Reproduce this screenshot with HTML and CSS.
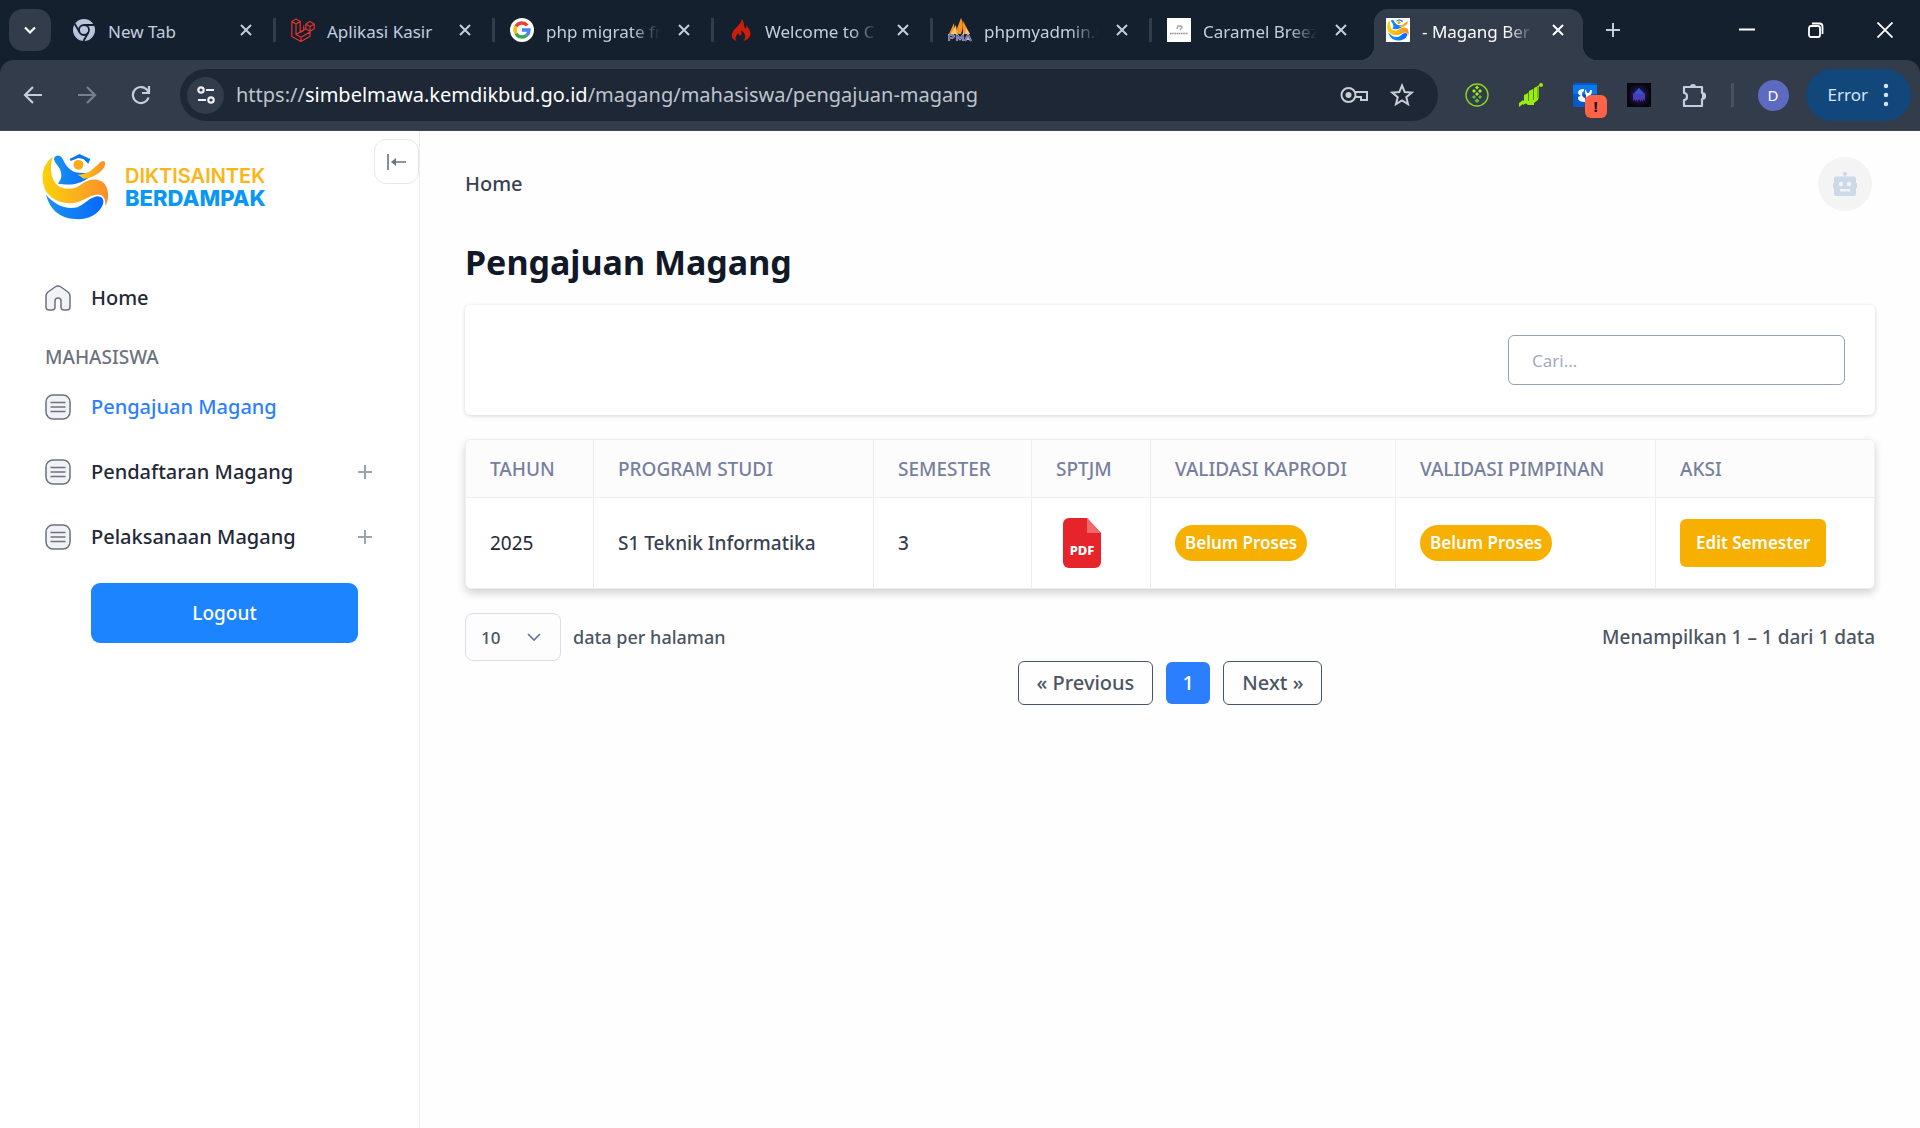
FILE: index.html
```html
<!DOCTYPE html>
<html lang="id">
<head>
<meta charset="utf-8">
<meta name="viewport" content="width=device-width, initial-scale=1">
<title>Magang Berdampak</title>
<link rel="stylesheet" href="styles.css">
</head>
<body>
<svg class="defs" aria-hidden="true">
  <symbol id="x" viewBox="0 0 16 16"><path d="M3 3l10 10M13 3L3 13" fill="none" stroke="currentColor" stroke-width="2"/></symbol>
  <symbol id="plus" viewBox="0 0 16 16"><path d="M8 1v14M1 8h14" fill="none" stroke="currentColor" stroke-width="2"/></symbol>
  <symbol id="list" viewBox="0 0 26 26"><rect x="1" y="1" width="24" height="24" rx="7" fill="#f1f2f4" stroke="#6b7280" stroke-width="1.5"/><path d="M5.500 8.500h15M5.500 13h15M5.500 17.500h15" stroke="#6b7280" stroke-width="1.5"/></symbol>
  <symbol id="logo" viewBox="5 9 68 67">
    <defs>
      <linearGradient id="gold" x1="0" x2="1"><stop offset="0" stop-color="#fbd20b"/><stop offset="1" stop-color="#f98f2b"/></linearGradient>
      <linearGradient id="sea" x1="0" x2="1"><stop offset="0" stop-color="#1a93ef"/><stop offset="1" stop-color="#0668ff"/></linearGradient>
    </defs>
    <path fill="url(#gold)" d="M16 12C8 17 4 27 6 38c2 13 14 21 27 21 12 0 19-8 28-9 6 0 9 4 8 12 5-7 4-20-3-25-7-4-15-2-20 2-6 5-11 6-18 5C16 42 11 27 16 12z"/>
    <path fill="url(#sea)" d="M9 50c8 10 20 16 32 13 8-3 12-10 20-11 6 0 8 5 5 10-5 9-15 14-27 13C22 74 13 65 9 50z"/>
    <path fill="url(#sea)" d="M17 14c2-5 7-4 9 0 4 9 10 14 17 14 5 0 9 1 14 2-8 6-16 10-25 10-4 0-8 0-11-1 5-5 4-10 2-15-2-4-5-6-6-10z"/>
    <path fill="url(#gold)" d="M41 30c8 0 13-3 18-8 4-3 7-8 10-5 1 5-4 10-9 13-5 3-9 4-13 4-2-2-4-3-6-4z"/>
    <path fill="#0878ee" d="M33 14l10-5 11 5-2 5-5-5-5-1-8 3z"/>
    <circle cx="42" cy="20" r="5" fill="#faab18"/>
  </symbol>
</svg>

<header class="browser">
  <div class="tabstrip">
    <button class="tab-search" aria-label="Search tabs"><svg width="16" height="16" viewBox="0 0 16 16"><path d="M3 5.500l5 5 5-5" fill="none" stroke="currentColor" stroke-width="2.200"/></svg></button>
    <div class="tab">
      <svg class="fav" viewBox="0 0 24 24"><circle cx="12" cy="12" r="11" fill="#b9c5dc"/><circle cx="12" cy="12" r="5" fill="none" stroke="#15202e" stroke-width="1.8"/><path d="M12 7h10M7.700 14.500L2.700 5.800M16.300 14.500L11.500 23" stroke="#15202e" stroke-width="1.8"/></svg>
      <span class="tab-title">New Tab</span><button class="close" aria-label="Close tab"><svg><use href="#x"/></svg></button>
    </div>
    <div class="tab">
      <svg class="fav" viewBox="0 0 24 24"><path d="M.8 3.500L5 1l4.200 2.500v11l3.500-2V7.500M.8 3.500v15L10 23.500l9-5.200v-5M.8 3.500L5 6l4.200-2.500M5 6v10.500l5 2.700 9-5.300M10 19.200v4.300M14.800 6l4.200-2.500L23.200 6v4.800L19 13.300l-4.200-2.500V6L19 8.500 23.200 6M19 8.500v4.800M5 16.500l9.800-5.700" fill="none" stroke="#e0332c" stroke-width="1.200" stroke-linejoin="round"/></svg>
      <span class="tab-title">Aplikasi Kasir</span><button class="close" aria-label="Close tab"><svg><use href="#x"/></svg></button>
    </div>
    <div class="tab">
      <svg class="fav" viewBox="0 0 24 24"><circle cx="12" cy="12" r="12" fill="#fff"/><g fill="none" stroke-width="3.400"><path d="M17.300 7.500A7 7 0 0 0 6 8.400" stroke="#ea4335"/><path d="M6 8.400a7 7 0 0 0 0 7.200" stroke="#fbbc05"/><path d="M6 15.600a7 7 0 0 0 10.700 1.600" stroke="#34a853"/><path d="M16.700 17.200A7 7 0 0 0 19 12h-7" stroke="#4285f4"/></g></svg>
      <span class="tab-title fade">php migrate fr</span><button class="close" aria-label="Close tab"><svg><use href="#x"/></svg></button>
    </div>
    <div class="tab">
      <svg class="fav" viewBox="0 0 24 24"><path d="M12.500 1c1 5-8 9-9.500 15-.7 3.500 1.500 6 4.500 7-2-3-.5-6 2.500-8-.5 3 2 3 2.500 1 .4-1.500-.8-2-.4-3.600 3.400 2 6 6 2.400 10.600 4-1 7-4 7-7.500 0-4-3-5-3.500-8.500-.8 1.500-.3 3-1.500 3.500C14 9 16.500 5 12.500 1z" fill="#cf1d0c"/></svg>
      <span class="tab-title fade">Welcome to C</span><button class="close" aria-label="Close tab"><svg><use href="#x"/></svg></button>
    </div>
    <div class="tab">
      <svg class="fav" viewBox="0 0 24 24"><path d="M1 16L6 5l1 11zM7 16L13 0c3 5 2 11 0 16zM15 16V3l7 13z" fill="#f7941e"/><path d="M3 16l5-9 1 9zM17 16l1-6 4 6z" fill="#fcc577"/><path d="M1 23v-6h4q2 2-1 3H1M9 23v-6l3 4 3-4v6M17 23l3-6 3 6M18 21h4" fill="none" stroke="#b9b9da" stroke-width="2.200"/><path d="M1 23v-6h4q2 2-1 3H1M9 23v-6l3 4 3-4v6M17 23l3-6 3 6" fill="none" stroke="#39396b" stroke-width=".8"/></svg>
      <span class="tab-title fade">phpmyadmin.n</span><button class="close" aria-label="Close tab"><svg><use href="#x"/></svg></button>
    </div>
    <div class="tab">
      <svg class="fav" viewBox="0 0 24 24"><path fill="#fff" d="M0 0h24v24H0z"/><path d="M10 11l1-3h3l1 1-2 3" fill="none" stroke="#b3a2a8" stroke-width="1.500"/><path d="M3 15.500h18" stroke="#9b8389" stroke-width="1.500" stroke-dasharray="1.500 .7"/></svg>
      <span class="tab-title fade">Caramel Breez</span><button class="close" aria-label="Close tab"><svg><use href="#x"/></svg></button>
    </div>
    <div class="tab tab-active">
      <svg class="fav" viewBox="0 0 24 24"><path fill="#fff" d="M0 0h24v24H0z"/><use href="#logo" x="1" y="1" width="22" height="22"/></svg>
      <span class="tab-title fade">- Magang Ber</span><button class="close" aria-label="Close tab"><svg><use href="#x"/></svg></button>
    </div>
    <button class="new-tab" aria-label="New tab"><svg width="16" height="16"><use href="#plus"/></svg></button>
    <div class="window-buttons">
      <button aria-label="Minimize"><svg width="16" height="16" viewBox="0 0 16 16"><path d="M0 7.500h16" stroke="currentColor" stroke-width="2"/></svg></button>
      <button aria-label="Restore"><svg width="16" height="16" viewBox="0 0 16 16"><g fill="none" stroke="currentColor" stroke-width="1.800"><rect x="1" y="4" width="11" height="11" rx="2"/><path d="M4 1.500h7.500a3 3 0 0 1 3 3V12"/></g></svg></button>
      <button aria-label="Close"><svg width="16" height="16" viewBox="0 0 16 16"><path d="M.5.500l15 15M15.500.5l-15 15" stroke="currentColor" stroke-width="1.800"/></svg></button>
    </div>
  </div>

  <div class="toolbar">
    <div class="nav">
      <button aria-label="Back"><svg width="20" height="20" viewBox="0 0 20 20"><path d="M19 10H2M10 2L2 10l8 8" fill="none" stroke="currentColor" stroke-width="2.200"/></svg></button>
      <button class="dim" aria-label="Forward"><svg width="20" height="20" viewBox="0 0 20 20"><path d="M1 10h17M10 2l8 8-8 8" fill="none" stroke="currentColor" stroke-width="2.200"/></svg></button>
      <button aria-label="Reload"><svg width="20" height="20" viewBox="0 0 20 20"><path d="M17.500 12.500A8 8 0 1 1 16.500 5.500L18 7.500M18 1v7h-7" fill="none" stroke="currentColor" stroke-width="2.200"/></svg></button>
    </div>
    <div class="omnibox">
      <button class="site-info" aria-label="Site information"><svg width="20" height="20" viewBox="0 0 20 20"><g fill="none" stroke="currentColor" stroke-width="2.200"><circle cx="5" cy="5" r="2.700"/><path d="M10 5h8M2 15h8"/><circle cx="15" cy="15" r="2.700"/></g></svg></button>
      <div class="url" role="textbox" aria-label="Address" contenteditable="true" spellcheck="false">https://<span>simbelmawa.kemdikbud.go.id</span>/magang/mahasiswa/pengajuan-magang</div>
      <button aria-label="Passwords"><svg width="28" height="20" viewBox="0 0 28 20"><circle cx="8.500" cy="10" r="7" fill="none" stroke="currentColor" stroke-width="2"/><circle cx="8.500" cy="10" r="3" fill="currentColor"/><path d="M14.500 7H27v8h-6v-3h-6" fill="none" stroke="currentColor" stroke-width="2"/></svg></button>
      <button aria-label="Bookmark"><svg width="24" height="24" viewBox="0 0 24 24"><path d="M12 2.500l2.700 6.600 7 .5-5.400 4.600 1.700 6.900-6-3.700-6 3.700 1.700-6.900L2.300 9.600l7-.5z" fill="none" stroke="currentColor" stroke-width="2"/></svg></button>
    </div>
    <div class="extensions">
      <button aria-label="Pineapple extension"><svg width="24" height="24" viewBox="0 0 24 24"><circle cx="12" cy="12" r="11" fill="none" stroke="#86d81b" stroke-width="1.400"/><g fill="#a3ee1c"><path d="M12 2.500l2 2-2 2-2-2zM9 6l2 2-2 2-2-2zM15 6l2 2-2 2-2-2zM12 9l2 2-2 2-2-2z"/></g><g fill="#5cc032"><path d="M9 12l2 2-2 2-2-2zM15 12l2 2-2 2-2-2zM12 15.500l2.500 2.300L12 20l-2.500-2.200z"/></g></svg></button>
      <button aria-label="Chart extension"><svg width="24" height="24" viewBox="0 0 24 24"><path d="M0 24v-4l4-3v4zM5 19v-7l4-2v12zM10 22V8l4-2v16zM15 20V5l4-2v14z" fill="#9cec0b"/><path d="M4 18l5-5v6l-5 3zM9 12l6 6v4H9zM14 8l6-6v13l-6 5z" fill="#9cec0b"/><circle cx="22" cy="2" r="2" fill="#9cec0b"/><path d="M9.500 9v9M14.500 6v11M19 4v11" stroke="#4e8424"/></svg></button>
      <button class="alert-ext" aria-label="Blue extension"><svg width="24" height="24" viewBox="0 0 24 24"><rect width="24" height="24" rx="2" fill="#0759c8"/><path d="M0 2h24v9H0z" fill="#0b78ea"/><path d="M11 6q-6 0-6 4 0 2 3 3-3 0-3 2 0 4 7 4v-4q-3-1-3-4 0-2 2-3zM13 6q0 4 2 4t2-3h2q0 5-3 6v4h-3v-5q-1-1-1-4z" fill="#fff"/></svg><span class="badge-alert">!</span></button>
      <button aria-label="Purple extension"><svg width="24" height="24" viewBox="0 0 24 24"><defs><radialGradient id="glow"><stop offset="0" stop-color="#3a1b75"/><stop offset="1" stop-color="#05050b"/></radialGradient></defs><path fill="url(#glow)" d="M0 0h24v24H0z"/><path d="M12 5l6 6v7l-2-2v3l-2-3v3l-2-3-2 3v-3l-2 3v-3l-2 2v-7z" fill="#4a3cb4"/><path d="M12 5l5 6H7z" fill="#2859c8"/></svg></button>
      <button aria-label="Extensions"><svg width="26" height="26" viewBox="0 0 26 26"><path d="M3 5h18v6a3 3 0 0 1 0 6v7H3v-6c4 0 4-7 0-7z" fill="none" stroke="currentColor" stroke-width="2.200" stroke-linejoin="round"/><path d="M9 5a3 3 0 0 1 6 0zM21 11a3 3 0 0 1 0 6z" fill="currentColor"/></svg></button>
    </div>
    <span class="divider"></span>
    <button class="avatar" aria-label="Profile D">D</button>
    <button class="error">Error <svg width="6" height="24" viewBox="0 0 6 24" fill="currentColor"><circle cx="3" cy="3" r="2.200"/><circle cx="3" cy="12" r="2.200"/><circle cx="3" cy="21" r="2.200"/></svg></button>
  </div>
</header>

<div class="app">
  <aside class="sidebar">
    <button class="collapse" aria-label="Collapse sidebar"><svg width="20" height="16" viewBox="0 0 20 16"><path d="M1 0v16M6 8h13" stroke="#6b7280" stroke-width="1.600"/><path d="M4 8l5-4v8z" fill="#6b7280"/></svg></button>
    <a class="brand" href="#">
      <svg width="67" height="66"><use href="#logo"/></svg>
      <span class="brand-text"><span>DIKTISAINTEK</span><b>BERDAMPAK</b></span>
    </a>
    <nav class="menu">
      <a href="#"><svg viewBox="0 0 26 26"><path d="M1 11q0-2 2-4l7-5q3-2 6 0l7 5q2 2 2 4v11q0 3-3 3h-3q-3 0-3-3v-6q0-3-3-3t-3 3v6q0 3-3 3H4q-3 0-3-3z" fill="#f1f2f4" stroke="#6b7280" stroke-width="1.500"/></svg>Home</a>
      <h2>MAHASISWA</h2>
      <a class="current" href="#"><svg><use href="#list"/></svg>Pengajuan Magang</a>
      <a href="#"><svg><use href="#list"/></svg>Pendaftaran Magang<svg class="expand" viewBox="0 0 14 14"><path d="M7 0v14M0 7h14" stroke="#9ca3af" stroke-width="2"/></svg></a>
      <a href="#"><svg><use href="#list"/></svg>Pelaksanaan Magang<svg class="expand" viewBox="0 0 14 14"><path d="M7 0v14M0 7h14" stroke="#9ca3af" stroke-width="2"/></svg></a>
    </nav>
    <button class="logout">Logout</button>
  </aside>

  <main class="content">
    <div class="topline">
      <a href="#">Home</a>
      <button class="bot" aria-label="Assistant"><svg width="24" height="24" viewBox="0 0 24 24"><path d="M11 4.500V3.600a2 2 0 1 1 2 0v.9h8a2 2 0 0 1 2 2V11h1v5h-1v6a2 2 0 0 1-2 2H3a2 2 0 0 1-2-2v-6H0v-5h1V6.500a2 2 0 0 1 2-2z" fill="#ccd9e9"/><circle cx="8" cy="12" r="2.200" fill="#f4f4f4"/><circle cx="16" cy="12" r="2.200" fill="#f4f4f4"/><path d="M7 17h10v2.500H7z" fill="#f4f4f4"/></svg></button>
    </div>
    <h1>Pengajuan Magang</h1>
    <section class="filter"><input type="search" placeholder="Cari..." aria-label="Cari"></section>

    <table>
      <colgroup><col class="c-year"><col class="c-program"><col class="c-semester"><col class="c-file"><col class="c-kaprodi"><col class="c-pimpinan"><col></colgroup>
      <thead><tr><th>TAHUN</th><th>PROGRAM STUDI</th><th>SEMESTER</th><th>SPTJM</th><th>VALIDASI KAPRODI</th><th>VALIDASI PIMPINAN</th><th>AKSI</th></tr></thead>
      <tbody><tr>
        <td class="year">2025</td><td>S1 Teknik Informatika</td><td>3</td>
        <td class="file"><a href="#" aria-label="PDF SPTJM"><svg width="38" height="50" viewBox="0 0 38 50"><path d="M6 0h18l14 15v29a6 6 0 0 1-6 6H6a6 6 0 0 1-6-6V6a6 6 0 0 1 6-6z" fill="#e5252a"/><path d="M24 0l14 15H24z" fill="#ef686c"/><text x="19" y="37" text-anchor="middle">PDF</text></svg></a></td>
        <td><span class="status">Belum Proses</span></td><td><span class="status">Belum Proses</span></td>
        <td><button class="edit">Edit Semester</button></td>
      </tr></tbody>
    </table>

    <div class="summary">
      <label class="per-page"><span class="select"><select><option>10</option><option>25</option><option>50</option></select><svg width="14" height="10" viewBox="0 0 14 10"><path d="M1 2l6 6 6-6" fill="none" stroke="#6b7194" stroke-width="1.600"/></svg></span>data per halaman</label>
      <p>Menampilkan 1 – 1 dari 1 data</p>
    </div>
    <nav class="pages" aria-label="Halaman"><button>« Previous</button><button class="page-current">1</button><button>Next »</button></nav>
  </main>
</div>
</body>
</html>
```
FILE: styles.css
```css
* { box-sizing: border-box; }
body {
  margin: 0;
  min-height: 100vh;
  display: flex;
  flex-direction: column;
  font-family: "Noto Sans", "Open Sans", sans-serif;
  font-size: 19px;
  line-height: 28px;
  color: #1f2937;
  background: #fefefe;
}
button { font: inherit; color: inherit; border: 0; background: none; padding: 0; cursor: pointer; }
a { color: inherit; text-decoration: none; }
svg { display: block; flex: none; }
h1, h2, p { margin: 0; }
.defs { position: absolute; width: 0; height: 0; }

/* browser frame */
.browser { background: #15202e; color: #c3cde0; font-size: 17px; }
.tabstrip { display: flex; align-items: center; height: 60px; padding-left: 9px; }
.tab-search { display: grid; place-items: center; width: 42px; height: 42px; margin-right: 4px; border-radius: 14px; background: #323c4b; color: #fff; }
.tab {
  position: relative;
  display: flex;
  align-items: center;
  flex: 0 1 219px;
  min-width: 0;
  height: 60px;
  padding: 0 20px 0 17px;
}
.tab::after { content: ""; position: absolute; right: -2px; width: 3px; height: 24px; background: #323c4b; }
.tab:nth-child(7)::after { display: none; }
.fav { width: 24px; height: 24px; }
.tab-title {
  flex: 1;
  min-width: 0;
  margin: 3px 16px 0 12px;
  white-space: nowrap;
}
.fade {
  -webkit-mask-image: linear-gradient(90deg, #000 75%, transparent);
  mask-image: linear-gradient(90deg, #000 75%, transparent);
}
.close svg { width: 16px; height: 16px; }
.tab-active { padding-right: 22px; color: #fff; }
.tab-active > * { z-index: 1; }
.tab-active::before {
  content: "";
  position: absolute;
  inset: 9px 5px 0;
  border-radius: 14px 14px 0 0;
  background: #323c4b;
}
.tab-active::after {
  left: -9px;
  right: -9px;
  bottom: 0;
  width: auto;
  height: 14px;
  z-index: 0;
  background:
    radial-gradient(circle at 0 0, transparent 14px, #323c4b 14px) left / 14px 14px no-repeat,
    radial-gradient(circle at 100% 0, transparent 14px, #323c4b 14px) right / 14px 14px no-repeat;
}
.new-tab { margin-left: 17px; }
.window-buttons { display: flex; gap: 53px; margin-left: auto; padding-right: 27px; color: #fff; }
.toolbar {
  display: flex;
  align-items: center;
  height: 71px;
  padding: 0 9px 0 23px;
  border-bottom: 1px solid #3c4654;
  border-radius: 14px 14px 0 0;
  background: #323c4b;
}
.nav { display: flex; gap: 34px; margin-right: 29px; }
.dim { color: #77808e; }
.omnibox { display: flex; flex: 1; align-items: center; min-width: 0; height: 52px; padding: 0 24px 0 7px; border-radius: 26px; background: #1d2736; }
.omnibox button { color: #c8cdd6; margin-left: 22px; }
.omnibox .site-info { display: grid; place-items: center; width: 37px; height: 37px; margin: 0 12px 0 0; border-radius: 50%; background: #323c4b; color: #eef0f4; }
.url { flex: 1; min-width: 0; overflow: hidden; white-space: nowrap; font-size: 20px; color: #bec3cb; outline: 0; }
.url span { color: #fff; }
.extensions { display: flex; align-items: center; gap: 30px; margin-left: 27px; }
.alert-ext { position: relative; }
.badge-alert { position: absolute; left: 12px; top: 12px; width: 22px; height: 23px; border-radius: 6px; background: #ff6347; color: #111; font-size: 15px; font-weight: 700; line-height: 23px; }
.divider { width: 3px; height: 24px; margin: 0 24px; background: #465163; }
.avatar { width: 31px; height: 31px; border-radius: 50%; background: #5c6bc0; color: #fff; font-size: 15px; line-height: 31px; }
.error { display: flex; align-items: center; gap: 15px; height: 52px; margin-left: 17px; padding: 0 22px; border-radius: 26px; background: #12477c; color: #d5e5fb; font-size: 17px; }

/* application */
.app { display: flex; flex: 1; }
.sidebar { position: relative; flex: none; width: 420px; padding: 23px 40px 40px 42px; border-right: 1px solid #ebecef; background: #fff; }
.collapse { position: absolute; top: 8px; right: 0; display: grid; place-items: center; width: 45px; height: 45px; border: 1px solid #e5e7eb; border-radius: 12px; background: #fff; }
.brand { display: flex; align-items: center; gap: 16px; }
.brand-text { display: flex; flex-direction: column; font-family: Inter, sans-serif; font-size: 20px; font-weight: 600; line-height: 22px; color: #fdb515; }
.brand-text b { font-size: 22px; font-weight: 800; color: #0b97f5; }
.menu { display: flex; flex-direction: column; padding: 45px 5px 0 3px; }
.menu a { display: flex; align-items: center; gap: 20px; height: 65px; font-size: 20px; font-weight: 500; }
.menu svg { width: 26px; height: 26px; }
.menu .expand { width: 14px; height: 14px; margin: 0 2px 0 auto; }
.menu h2 { height: 44px; padding-top: 13px; font-size: 19px; line-height: 28px; font-weight: 500; color: #6b7280; }
.menu .current { color: #2b7fff; }
.logout { display: block; width: 267px; height: 60px; margin: 14px 0 0 49px; border-radius: 9px; background: #1c84ff; color: #fff; font-size: 19px; font-weight: 500; }

.content { flex: 1; min-width: 0; padding: 26px 45px 40px; font-weight: 500; color: #4b5563; }
.topline { display: flex; align-items: center; justify-content: space-between; height: 54px; padding-right: 3px; font-size: 20px; color: #374151; }
.bot { display: grid; place-items: center; width: 54px; height: 54px; border-radius: 50%; background: #f4f4f4; }
h1 { margin: 29px 0 20px; font-size: 34px; line-height: 45px; font-weight: 700; color: #111827; }
.filter { display: flex; justify-content: flex-end; padding: 30px; border-radius: 6px; background: #fff; box-shadow: 0 1px 4px rgba(0, 0, 0, .16); }
.filter input { width: 337px; height: 50px; padding: 0 23px; border: 1px solid #94a3b8; border-radius: 6px; background: #fff; font: 400 17px "Noto Sans", sans-serif; color: #374151; }
.filter input::placeholder { color: #9fabc2; }
table { width: 100%; margin-top: 24px; border-spacing: 0; table-layout: fixed; border: 1px solid #eeeeef; border-radius: 6px; overflow: hidden; background: #fff; box-shadow: 0 4px 9px rgba(0, 0, 0, .18); }
.c-year { width: 127px; }
.c-program { width: 280px; }
.c-semester { width: 158px; }
.c-file { width: 119px; }
.c-kaprodi { width: 245px; }
.c-pimpinan { width: 260px; }
th, td { padding: 0 24px; text-align: left; white-space: nowrap; border-left: 1px solid #eeeeef; }
th:first-child, td:first-child { border-left: 0; }
th { height: 57px; background: #fcfcfc; font-size: 19px; font-weight: 500; color: #777f9f; }
td { height: 91px; border-top: 1px solid #eeeeef; color: #374151; }
.year { font-size: 19px; font-weight: 400; color: #1f2937; }
.file a { display: block; width: 38px; margin-left: 7px; }
.file text { font: 800 13px "Noto Sans", sans-serif; fill: #fff; }
.status { display: inline-block; padding: 0 10px; height: 36px; border-radius: 18px; background: #f8b000; color: #fff; font-size: 17px; line-height: 36px; font-weight: 600; }
.edit { height: 48px; padding: 0 16px; border-radius: 6px; background: #f8b000; color: #fff; font-size: 17px; font-weight: 600; }
.summary { display: flex; align-items: center; justify-content: space-between; margin-top: 24px; }
.per-page { display: flex; align-items: center; gap: 12px; font-size: 18px; }
.select { display: grid; align-items: center; width: 96px; }
.select > * { grid-area: 1 / 1; }
.select svg { justify-self: end; margin-right: 20px; pointer-events: none; }
select { appearance: none; width: 100%; height: 48px; padding: 0 15px; border: 1px solid #dcdcea; border-radius: 8px; background: #fdfdfe; font: 500 17px "Noto Sans", sans-serif; color: #4b5563; }
.pages { display: flex; align-items: center; justify-content: center; gap: 13px; font-size: 20px; }
.pages button { height: 44px; padding: 0 18px; border: 1px solid #475569; border-radius: 6px; }
.pages .page-current { width: 44px; height: 42px; padding: 0; border: 0; background: #2b7fff; color: #fff; }
```
